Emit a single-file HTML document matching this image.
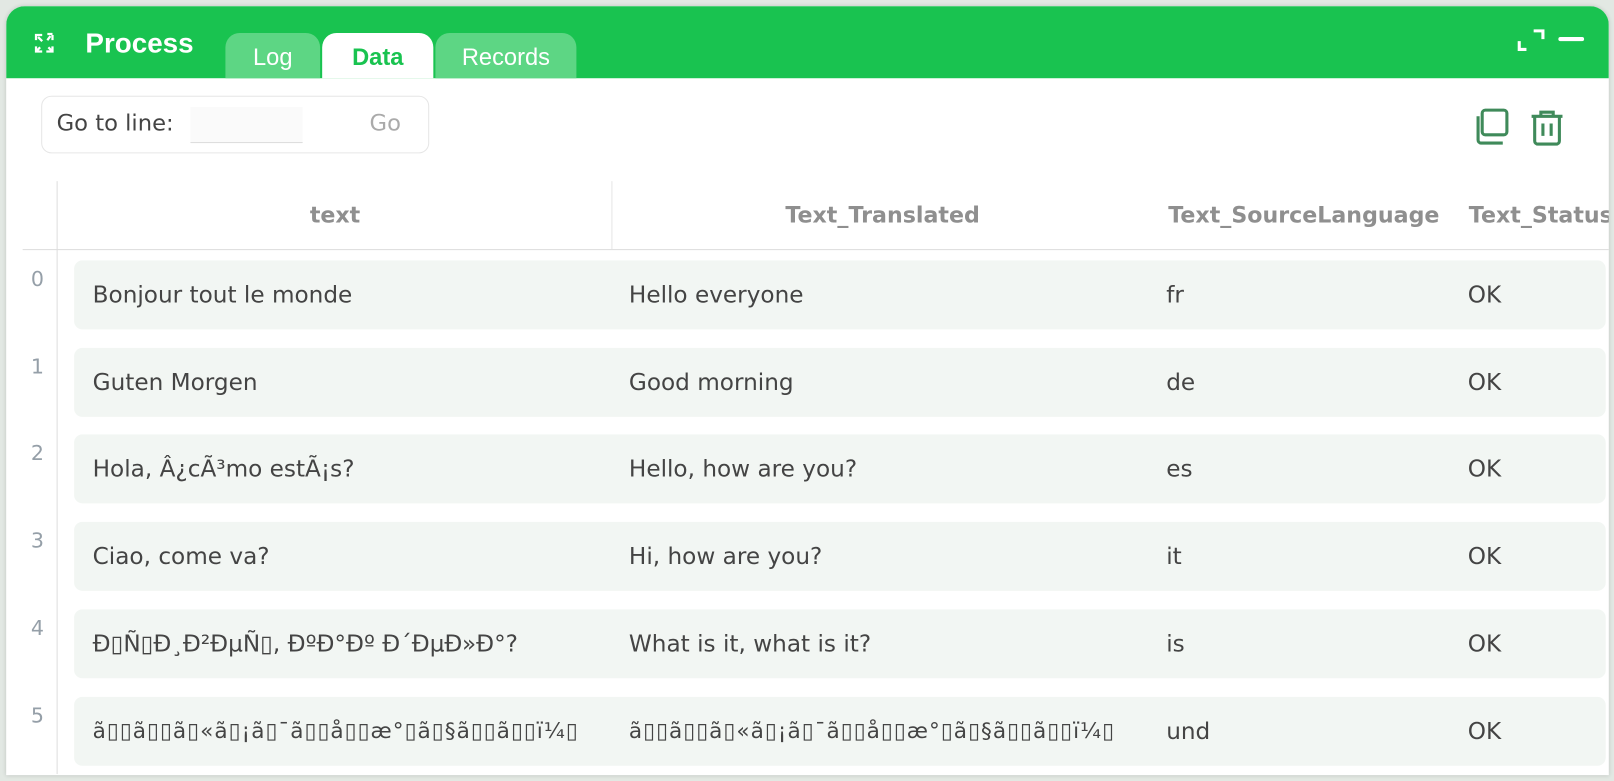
<!DOCTYPE html>
<html><head><meta charset="utf-8"><style>
*{box-sizing:border-box;margin:0;padding:0}
body{width:1614px;height:781px;background:#e2e8e3;font-family:"DejaVu Sans","Noto Sans CJK JP",sans-serif;position:relative;overflow:hidden}
.wrap{position:absolute;left:0;top:0;width:1568px;height:759px;transform:scale(1.0293);transform-origin:0 0}
.panel{position:absolute;left:6px;top:6px;width:1557px;height:747px;background:#fff;border-radius:18px 18px 0 0;overflow:hidden;box-shadow:0 0 4px rgba(0,0,0,.15)}
.hdr{position:absolute;left:0;top:0;width:100%;height:70px;background:#19c350}
.title{position:absolute;left:77px;top:21px;color:#fff;font-weight:bold;font-size:27px;font-family:"Liberation Sans",sans-serif}
.tab{position:absolute;top:26px;height:44px;border-radius:14px 14px 0 0;background:#5dd684;color:#fff;font-size:23px;text-align:center;line-height:46px;font-family:"Liberation Sans",sans-serif}
.tab.act{background:#fff;color:#19c350;font-weight:bold}
.goto{position:absolute;left:34px;top:87px;width:377px;height:56px;border:1px solid #e6e6e6;border-radius:10px}
.goto .l{position:absolute;left:14px;top:14px;font-size:22px;color:#444}
.goto .in{position:absolute;left:144px;top:10px;width:109px;height:35px;background:#fafafa;border-bottom:1px solid #ddd}
.goto .g{position:absolute;left:318px;top:14px;font-size:22px;color:#aaa}
.vl{position:absolute;left:49px;top:170px;width:1px;height:576px;background:#ddd}
.hl{position:absolute;left:16px;top:236px;width:1590px;height:1px;background:#ddd}
.cs{position:absolute;left:588px;top:170px;width:1px;height:66px;background:#e6e6e6}
.th{position:absolute;top:191px;font-size:21.5px;font-weight:bold;color:#8f8f8f;white-space:nowrap}
.row{position:absolute;left:66px;width:1488px;height:67px;background:#f2f6f3;border-radius:8px;font-size:22.5px;color:#444}
.row span{position:absolute;top:21px;white-space:nowrap}
.idx{position:absolute;left:24px;font-size:20px;color:#959fa8}
.mj{font-size:21px;letter-spacing:1px}
</style></head><body>
<div class="wrap">
<div class="panel">
<div class="hdr">
<svg style="position:absolute;left:26px;top:24px" width="22" height="24" viewBox="0 0 22 24" fill="none" stroke="#fff" stroke-width="2.2"><path d="M3 9V4h6M5 6l4 4"/><path d="M19 9V4M14 3l5 0M17 5l-3 4"/><path d="M3 15v5h6M3 20l4-4"/><path d="M19 15v5h-6M19 20l-4-4"/></svg>
<div class="title">Process</div>
<div class="tab" style="left:213px;width:92px">Log</div>
<div class="tab act" style="left:307px;width:108px">Data</div>
<div class="tab" style="left:417px;width:137px">Records</div>
<svg style="position:absolute;left:1468px;top:22px" width="28" height="26" viewBox="0 0 28 26" fill="none" stroke="#fff" stroke-width="3"><path d="M2 12v8h7"/><path d="M16 2h9v8"/></svg>
<div style="position:absolute;left:1508px;top:30px;width:25px;height:4px;background:#fff;border-radius:2px"></div>
</div>
<div class="goto"><div class="l">Go to line:</div><div class="in"></div><div class="g">Go</div></div>
<svg style="position:absolute;left:1423px;top:98px" width="40" height="40" viewBox="0 0 40 40" fill="none" stroke="#3f8a5a" stroke-width="3"><rect x="11" y="3" width="24" height="24" rx="3"/><path d="M7 9v23a3 3 0 0 0 3 3h21"/></svg>
<svg style="position:absolute;left:1480px;top:98px" width="34" height="40" viewBox="0 0 34 40" fill="none" stroke="#3f8a5a" stroke-width="3"><path d="M2 9h30"/><path d="M11 9V5h12v4"/><path d="M5 9v24a3 3 0 0 0 3 3h18a3 3 0 0 0 3-3V9"/><path d="M13 16v12M21 16v12"/></svg>
<div class="vl"></div><div class="hl"></div><div class="cs"></div>
<div class="th" style="left:295px">text</div>
<div class="th" style="left:757px">Text_Translated</div>
<div class="th" style="left:1129px">Text_SourceLanguage</div>
<div class="th" style="left:1421px">Text_Status</div>

<div class="idx" style="top:253px">0</div>
<div class="row" style="top:247px"><span style="left:18px">Bonjour tout le monde</span><span style="left:539px">Hello everyone</span><span style="left:1061px">fr</span><span style="left:1354px">OK</span></div>
<div class="idx" style="top:338px">1</div>
<div class="row" style="top:332px"><span style="left:18px">Guten Morgen</span><span style="left:539px">Good morning</span><span style="left:1061px">de</span><span style="left:1354px">OK</span></div>
<div class="idx" style="top:422px">2</div>
<div class="row" style="top:416px"><span style="left:18px">Hola, Â¿cÃ³mo estÃ¡s?</span><span style="left:539px">Hello, how are you?</span><span style="left:1061px">es</span><span style="left:1354px">OK</span></div>
<div class="idx" style="top:507px">3</div>
<div class="row" style="top:501px"><span style="left:18px">Ciao, come va?</span><span style="left:539px">Hi, how are you?</span><span style="left:1061px">it</span><span style="left:1354px">OK</span></div>
<div class="idx" style="top:592px">4</div>
<div class="row" style="top:586px"><span style="left:18px">Ð▯Ñ▯Ð¸Ð²ÐµÑ▯, ÐºÐ°Ðº Ð´ÐµÐ»Ð°?</span><span style="left:539px">What is it, what is it?</span><span style="left:1061px">is</span><span style="left:1354px">OK</span></div>
<div class="idx" style="top:677px">5</div>
<div class="row" style="top:671px"><span class="mj" style="left:18px">ã▯▯ã▯▯ã▯«ã▯¡ã▯¯ã▯▯å▯▯æ°▯ã▯§ã▯▯ã▯▯ï¼▯</span><span class="mj" style="left:539px">ã▯▯ã▯▯ã▯«ã▯¡ã▯¯ã▯▯å▯▯æ°▯ã▯§ã▯▯ã▯▯ï¼▯</span><span style="left:1061px">und</span><span style="left:1354px">OK</span></div>
</div>
</div>
</body></html>
